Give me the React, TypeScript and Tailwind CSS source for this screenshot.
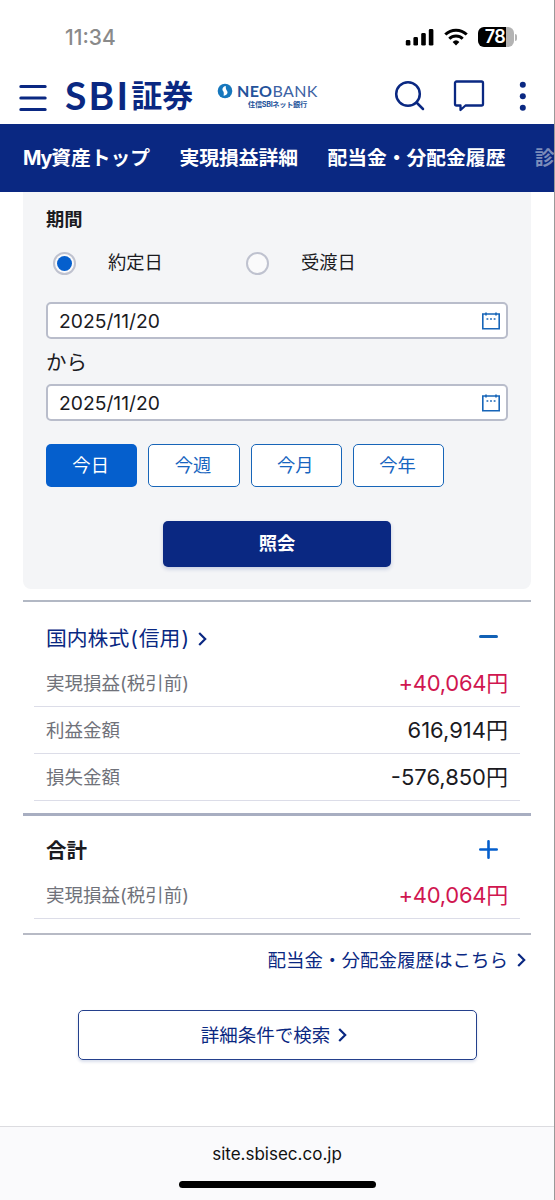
import React from 'react';

const navItems = ['実現損益詳細', '配当金・分配金履歴'];

const periods = [
  { label: '今日', active: true },
  { label: '今週', active: false },
  { label: '今月', active: false },
  { label: '今年', active: false },
];

const StatusBar: React.FC = () => (
  <div className="flex h-[68px] items-center pt-[6px] pl-[65px] pr-[37px]">
    <span className="text-[21px] leading-none font-medium text-[#8a8a8a]">11:34</span>
    <div className="ml-auto flex items-center">
      <svg width="29" height="18" viewBox="0 0 29 18" fill="#000">
        <rect x="0.8" y="12" width="4.6" height="5.6" rx="1.4" />
        <rect x="8.4" y="9" width="4.6" height="8.6" rx="1.4" />
        <rect x="16.2" y="5" width="4.6" height="12.6" rx="1.4" />
        <rect x="23.8" y="1" width="4.6" height="16.6" rx="1.4" />
      </svg>
      <svg className="ml-[10px]" width="24" height="18" viewBox="0 0 24 18" fill="none" stroke="#000" strokeWidth="3">
        <path d="M1.3 6.5a15.3 15.3 0 0 1 21.4 0" />
        <path d="M5.3 10.7a9.6 9.6 0 0 1 13.4 0" />
        <path d="M8.6 13.9a5 5 0 0 1 6.8 0L12 17.4z" fill="#000" stroke="none" />
      </svg>
      <div className="ml-[10px] flex h-[20px] w-[36px] items-center justify-center rounded-[6px] bg-linear-to-r from-black from-[79%] to-[#b3b3b3] to-[79%] pr-[2px]">
        <span className="text-[18px] leading-none font-semibold tracking-[-0.5px] text-white">78</span>
      </div>
      <div className="ml-px h-[7px] w-[2px] rounded-r-full bg-[#b3b3b3]" />
    </div>
  </div>
);

const Header: React.FC = () => (
  <header className="flex h-[56px] items-center text-[#0a2882]">
    <svg className="mt-[4px] ml-[19px] shrink-0" width="28" height="28" viewBox="0 0 28 28" stroke="currentColor" strokeWidth="3" strokeLinecap="round">
      <path d="M1.8 2.5h24.4M1.8 14h24.4M1.8 25.5h24.4" />
    </svg>
    <div className="mb-[2px] ml-[18px] flex w-[130px] shrink-0 items-center whitespace-nowrap">
      <span className="font-['Lato'] text-[39px] leading-none font-bold tracking-[2.2px]">SBI</span>
      <span className="ml-px text-[31px] leading-none font-bold">証券</span>
    </div>
    <div className="ml-[22px] w-[101px] shrink-0 whitespace-nowrap">
      <div className="flex items-center text-[#3d63a4]">
        <svg className="shrink-0" width="16" height="16" viewBox="0 0 16 16">
          <circle cx="8" cy="8" r="7.3" fill="#1677bd" />
          <path d="M8.8 3C5.6 3.8 4.6 6.2 6.2 8.2C6.9 9.3 6.9 10.5 6.6 12.8C10.2 12.3 11.4 9.8 9.9 7.8C9 6.5 8.7 5 8.8 3z" fill="#fff" />
        </svg>
        <span className="ml-[4px] font-['Lato'] text-[16px] leading-none tracking-[0.4px]"><b className="text-[#24539b]">NEO</b>BANK</span>
      </div>
      <div className="mt-[2px] ml-[31px] text-[7.2px] leading-none font-bold tracking-[-0.3px] text-[#24539b]">住信SBIネット銀行</div>
    </div>
    <svg className="ml-[76px] shrink-0" width="32" height="32" viewBox="0 0 32 32" fill="none" stroke="currentColor" strokeWidth="2.5" strokeLinecap="round">
      <circle cx="14" cy="14" r="11.8" />
      <path d="M22.5 22.5l6.5 6.5" />
    </svg>
    <svg className="ml-[27px] shrink-0" width="32" height="32" viewBox="0 0 32 32" fill="none" stroke="currentColor" strokeWidth="2.3" strokeLinejoin="round">
      <path d="M3.5 1.5h25a1.5 1.5 0 0 1 1.5 1.5v21a1.5 1.5 0 0 1-1.5 1.5H12.5L7.5 30v-4.5H3.5A1.5 1.5 0 0 1 2 24V3A1.5 1.5 0 0 1 3.5 1.5z" />
    </svg>
    <svg className="ml-[34px] shrink-0" width="7" height="30" viewBox="0 0 7 30" fill="currentColor">
      <circle cx="3.8" cy="3.8" r="3" />
      <circle cx="3.8" cy="15.2" r="3" />
      <circle cx="3.8" cy="26.8" r="3" />
    </svg>
  </header>
);

const CalendarIcon: React.FC = () => (
  <svg width="18" height="18" viewBox="0 0 18 18" fill="none" stroke="#1765b8" strokeWidth="1.6">
    <path d="M0.8 2h16.4v14.8H0.8zM4 0.5v3M14 0.5v3" />
    <path d="M4.5 7h1.8M8.1 7h1.8M11.7 7h1.8" />
  </svg>
);

const DateField: React.FC<{ value: string }> = ({ value }) => (
  <div className="flex h-[37px] items-center justify-between rounded-[5px] border-2 border-[#b9bdcb] bg-white pr-[6px] pl-[11px]">
    <span className="pt-[2px] text-[19.3px] leading-none">{value}</span>
    <CalendarIcon />
  </div>
);

const Radio: React.FC<{ checked?: boolean }> = ({ checked }) => (
  <span className="flex size-[23px] items-center justify-center rounded-full border-2 border-[#bfc2cf] bg-[#fafafb]">
    {checked && <span className="size-[15px] rounded-full bg-[#055fcd]" />}
  </span>
);

const Chevron: React.FC = () => (
  <svg width="9" height="14" viewBox="0 0 9 14" fill="none" stroke="#0a2882" strokeWidth="2.2">
    <path d="M1.2 1l6 6-6 6" />
  </svg>
);

const Row: React.FC<{ label: string; value: string; gain?: boolean }> = ({ label, value, gain }) => (
  <div className="mx-[11px] flex h-[47px] items-center justify-between border-b border-[#dcdde8] px-[12px]">
    <span className="text-[18.5px] leading-none text-[#70727a]">{label}</span>
    <span
      className={
        gain
          ? 'text-[22px] leading-none tracking-[-0.25px] text-[#d01650]'
          : 'text-[22px] leading-none text-[#1b1b1f]'
      }
    >
      {value}
    </span>
  </div>
);

export default function App() {
  return (
    <div className="flex h-[1200px] w-[555px] flex-col overflow-hidden border-r border-[#999] bg-white font-['Inter','Noto_Sans_CJK_JP',sans-serif] text-[#1b1b1f]">
      <StatusBar />
      <Header />

      <nav className="flex h-[68px] shrink-0 items-center gap-[29.3px] overflow-hidden bg-[#0a2882] pt-[2px] pl-[23px] text-[19.8px] leading-none font-bold whitespace-nowrap text-white">
        <span>
          <span className="tracking-[-1.2px]">My</span>資産トップ
        </span>
        {navItems.map((item) => (
          <span key={item}>{item}</span>
        ))}
        <span className="text-[#7c8cba]">診断</span>
      </nav>

      <main className="flex flex-1 flex-col px-[23px]">
        {/* Search conditions */}
        <section className="h-[397px] rounded-b-[8px] bg-[#f4f5f7] px-[23px] pt-[15px]">
          <h2 className="text-[18.3px] leading-[24px] font-bold">期間</h2>
          <div className="mt-[19px] flex h-[26px] items-center pl-[7px] text-[18.3px] leading-none">
            <Radio checked />
            <span className="mb-[2px] ml-[32px] w-[138px]">約定日</span>
            <Radio />
            <span className="mb-[2px] ml-[32px]">受渡日</span>
          </div>
          <div className="mt-[26px]">
            <DateField value="2025/11/20" />
            <div className="flex h-[45px] items-center pt-[3px] text-[20.5px] leading-none">から</div>
            <DateField value="2025/11/20" />
          </div>
          <div className="mt-[23px] flex gap-[11px]">
            {periods.map((p) => (
              <button
                key={p.label}
                className={
                  p.active
                    ? 'h-[43px] w-[91.3px] rounded-[5px] bg-[#055fcd] pr-[2px] text-[18.3px] leading-none text-white'
                    : 'h-[43px] w-[91.3px] rounded-[5px] border-[1.5px] border-[#1765b8] bg-white pr-[2px] text-[18.3px] leading-none text-[#1765c0]'
                }
              >
                {p.label}
              </button>
            ))}
          </div>
          <button className="mx-auto mt-[34px] block h-[46px] w-[228px] rounded-[5px] bg-[#0a2882] pb-[2px] text-[18.3px] leading-none font-bold text-white shadow-[0_2px_4px_rgba(10,40,130,0.2)]">
            照会
          </button>
        </section>

        {/* Margin trading result */}
        <section className="mt-[11px] border-t-2 border-[#b2b8c4] pt-[12px]">
          <div className="flex h-[46px] items-center justify-between pr-[33px] pl-[23px]">
            <span className="flex items-center gap-[8px] pt-[5px] text-[20.8px] leading-none text-[#0a2882]">
              <span>
                国内株式<span className="px-px">(</span>信用<span className="px-px">)</span>
              </span>
              <Chevron />
            </span>
            <span className="mb-px h-[3px] w-[19px] rounded-full bg-[#1261b5]" />
          </div>
          <Row label="実現損益(税引前)" value="+40,064円" gain />
          <Row label="利益金額" value="616,914円" />
          <Row label="損失金額" value="-576,850円" />
        </section>

        {/* Total */}
        <section className="mt-[12px] border-t-[3px] border-b-2 border-t-[#a8aec1] border-b-[#b7bac5] pt-[10px] pb-[14px]">
          <div className="flex h-[46px] items-center justify-between pr-[33px] pl-[23px]">
            <span className="pt-[4px] text-[20.5px] leading-none font-bold">合計</span>
            <svg width="19" height="19" viewBox="0 0 19 19" stroke="#055fcd" strokeWidth="2.6" strokeLinecap="round">
              <path d="M1.3 9.5h16.4M9.5 1.3v16.4" />
            </svg>
          </div>
          <Row label="実現損益(税引前)" value="+40,064円" gain />
        </section>

        <a className="mt-[12px] mr-[5px] flex h-[26px] items-center justify-end gap-[9px] text-[18.5px] leading-none text-[#0a2882]">
          配当金・分配金履歴はこちら <Chevron />
        </a>
        <button className="mx-auto mt-[37px] flex h-[50px] w-[399px] items-center justify-center gap-[8px] rounded-[5px] border-[1.5px] border-[#24408c] pr-[6px] text-[18.5px] leading-none text-[#0a2882] shadow-[0_2px_3px_rgba(10,40,130,0.15)]">
          詳細条件で検索 <Chevron />
        </button>
      </main>

      <footer className="flex h-[74px] shrink-0 flex-col items-center border-t border-[#dcdce0] bg-[#fafafc]">
        <span className="mt-[17px] text-[17px] leading-[20px] text-[#111]">site.sbisec.co.jp</span>
        <div className="mt-[17px] h-[7px] w-[197px] rounded-full bg-black" />
      </footer>
    </div>
  );
}
